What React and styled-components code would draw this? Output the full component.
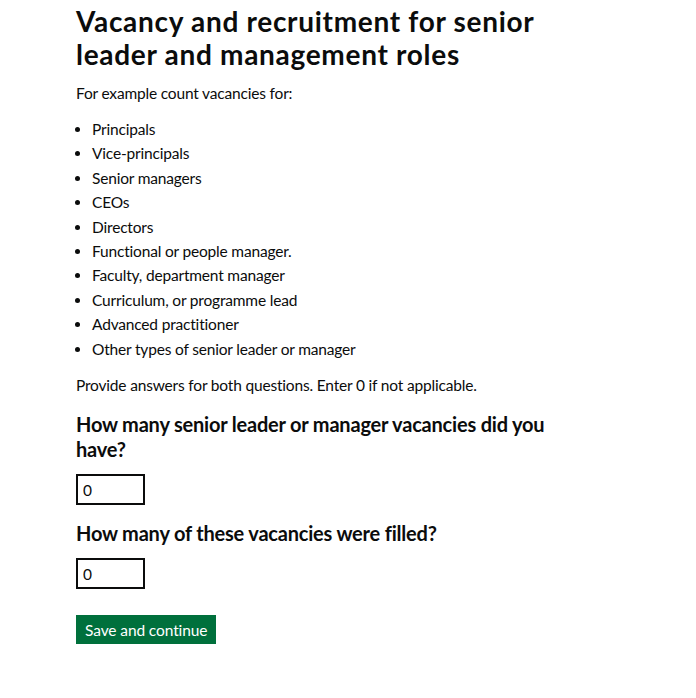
import React from 'react';
import styled, { createGlobalStyle } from 'styled-components';

const GlobalStyle = createGlobalStyle`
  body {
    margin: 0;
    background: #ffffff;
    font-family: Lato, "Liberation Sans", Arial, sans-serif;
    color: #0b0c0c;
  }
`;

const Page = styled.main`
  padding: 5px 0 0 76px;
  width: 500px;
`;

const Title = styled.h1`
  margin: 0;
  font-size: 28px;
  line-height: 33px;
  letter-spacing: 0.7px;
  font-weight: 700;
`;

const Body = styled.p`
  margin: ${({ $top }) => $top}px 0 0;
  font-size: 15.5px;
  line-height: 24px;
  letter-spacing: -0.18px;
`;

const List = styled.ul`
  margin: 12px 0 0;
  padding-left: 16px;
  font-size: 15.5px;
  line-height: 24.4px;
  letter-spacing: -0.18px;
`;

const Question = styled.label`
  display: block;
  margin: ${({ $top }) => $top}px 0 12px;
  font-size: 20px;
  line-height: 25px;
  letter-spacing: -0.2px;
  font-weight: 700;
`;

const Input = styled.input`
  display: block;
  box-sizing: border-box;
  width: 69px;
  height: 31px;
  margin: 0;
  padding: 0 5px;
  border: 2px solid #0b0c0c;
  border-radius: 0;
  font-family: inherit;
  font-size: 15.5px;
  color: #0b0c0c;
`;

const Button = styled.button`
  display: block;
  box-sizing: border-box;
  height: 29px;
  margin-top: 26px;
  padding: 0 9px;
  border: 0;
  border-radius: 0;
  background: #00703c;
  box-shadow: 0 2px 0 #002d18;
  color: #ffffff;
  font-family: inherit;
  font-size: 15.5px;
  letter-spacing: -0.1px;
  cursor: pointer;
`;

const roles = [
  'Principals',
  'Vice-principals',
  'Senior managers',
  'CEOs',
  'Directors',
  'Functional or people manager.',
  'Faculty, department manager',
  'Curriculum, or programme lead',
  'Advanced practitioner',
  'Other types of senior leader or manager',
];

export default function App() {
  return (
    <>
      <GlobalStyle />
      <Page>
        <Title>Vacancy and recruitment for senior leader and management roles</Title>
        <Body $top={10}>For example count vacancies for:</Body>
        <List>
          {roles.map((r) => (
            <li key={r}>{r}</li>
          ))}
        </List>
        <Body $top={12}>Provide answers for both questions. Enter 0 if not applicable.</Body>
        <Question htmlFor="vacancies" $top={15}>How many senior leader or manager vacancies did you have?</Question>
        <Input id="vacancies" defaultValue="0" />
        <Question htmlFor="filled" $top={16}>How many of these vacancies were filled?</Question>
        <Input id="filled" defaultValue="0" />
        <Button>Save and continue</Button>
      </Page>
    </>
  );
}
